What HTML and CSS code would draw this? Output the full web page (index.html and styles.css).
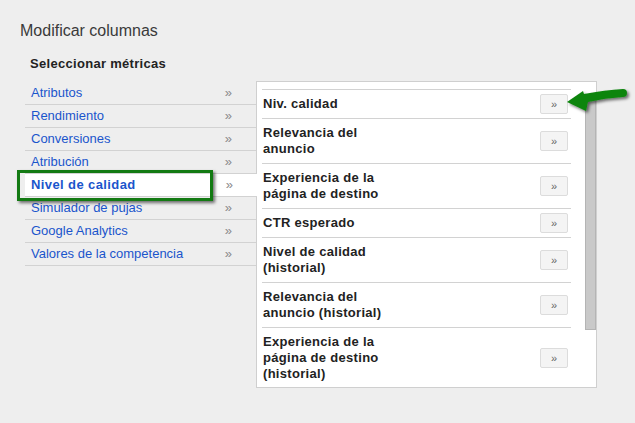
FILE: index.html
```html
<!DOCTYPE html>
<html lang="es">
<head>
<meta charset="utf-8">
<link rel="stylesheet" href="styles.css">
</head>
<body>
<div class="page">
  <h1 class="title">Modificar columnas</h1>
  <h2 class="subtitle">Seleccionar métricas</h2>
  <div class="main">
    <ul class="cats">
      <li class="cat"><span>Atributos</span><span class="chev">»</span></li>
      <li class="cat"><span>Rendimiento</span><span class="chev">»</span></li>
      <li class="cat"><span>Conversiones</span><span class="chev">»</span></li>
      <li class="cat"><span>Atribución</span><span class="chev">»</span></li>
      <li class="cat selected"><span>Nivel de calidad</span><span class="chev">»</span></li>
      <li class="cat"><span>Simulador de pujas</span><span class="chev">»</span></li>
      <li class="cat"><span>Google Analytics</span><span class="chev">»</span></li>
      <li class="cat"><span>Valores de la competencia</span><span class="chev">»</span></li>
    </ul>
    <div class="panel">
      <div class="scroll">
        <div class="inner">
          <div class="addall"><a>Añadir todas las columnas</a></div>
          <div class="row"><div class="label">Niv. calidad</div><button class="add">»</button></div>
          <div class="row"><div class="label">Relevancia del anuncio</div><button class="add">»</button></div>
          <div class="row"><div class="label">Experiencia de la página de destino</div><button class="add">»</button></div>
          <div class="row"><div class="label">CTR esperado</div><button class="add">»</button></div>
          <div class="row"><div class="label">Nivel de calidad (historial)</div><button class="add">»</button></div>
          <div class="row"><div class="label">Relevancia del anuncio (historial)</div><button class="add">»</button></div>
          <div class="row"><div class="label">Experiencia de la página de destino (historial)</div><button class="add">»</button></div>
        </div>
      </div>
      <div class="track"><div class="thumb"></div></div>
    </div>
  </div>
</div>
<div class="highlight"></div>
<svg class="arrow" width="75" height="45" viewBox="0 0 75 45">
  <defs>
    <filter id="sh" x="-20%" y="-30%" width="150%" height="170%">
      <feDropShadow dx="2" dy="2" stdDeviation="1.5" flood-color="#000" flood-opacity="0.55"/>
    </filter>
  </defs>
  <path d="M7 22 L23 11 L24 14 Q45 10 63 9 Q67 9 67 13 Q67 17 63 17 Q45 18 28 22 L26 31 Z" fill="#108510" filter="url(#sh)"/>
</svg>
</body>
</html>
```

FILE: styles.css
```css
* { box-sizing: border-box; }
html, body { margin: 0; padding: 0; }
body {
  background: #eeeeee;
  font-family: "Liberation Sans", Arial, sans-serif;
  width: 635px;
  height: 423px;
  overflow: hidden;
  position: relative;
}
.page { padding: 21px 0 0 20px; }
.title {
  margin: 0;
  font-size: 16px;
  font-weight: normal;
  line-height: 19px;
  color: #3a3a3a;
}
.subtitle {
  margin: 16px 0 0 10px;
  font-size: 13px;
  font-weight: bold;
  line-height: 15px;
  color: #222;
  letter-spacing: 0.3px;
}
.main {
  display: flex;
  align-items: flex-start;
  margin: 11px 0 0 5px;
}
.cats {
  list-style: none;
  margin: 0;
  padding: 0;
  width: 231px;
  position: relative;
  z-index: 2;
}
.cat {
  display: flex;
  justify-content: space-between;
  align-items: center;
  height: 23px;
  padding: 0 24px 1px 6px;
  border-bottom: 1px solid #d2d2d2;
  font-size: 13px;
  color: #1a55cc;
}
.cat .chev { color: #8a8a8a; font-size: 13px; }
.cat.selected {
  background: #fff;
  font-weight: bold;
  margin-right: -1px;
  letter-spacing: 0.4px;
}
.cat.selected .chev { font-weight: normal; letter-spacing: 0; }
.panel {
  width: 341px;
  height: 307px;
  margin-top: -1px;
  background: #fff;
  border: 1px solid #cfcfcf;
  display: flex;
  position: relative;
  z-index: 1;
}
.scroll {
  width: 328px;
  height: 100%;
  overflow: hidden;
  padding: 0 14px 0 5px;
}
.inner { margin-top: -12px; }
.addall {
  height: 19px;
  line-height: 15px;
  font-size: 13px;
  text-align: right;
  padding-right: 2px;
}
.addall a { color: #1a55cc; }
.row {
  display: flex;
  align-items: center;
  justify-content: space-between;
  border-top: 1px solid #d2d2d2;
  padding: 0 3px 0 1px;
}
.label {
  width: 125px;
  padding: 6px 0;
  font-size: 13px;
  font-weight: bold;
  line-height: 16px;
  color: #222;
  letter-spacing: 0.3px;
}
.add {
  width: 28px;
  height: 20px;
  padding: 0;
  background: #f4f4f4;
  border: 1px solid #dcdcdc;
  border-radius: 2px;
  font-family: "Liberation Sans", Arial, sans-serif;
  font-size: 11px;
  color: #666;
  line-height: 17px;
}
.track {
  width: 11px;
  height: 100%;
  padding-top: 18px;
}
.thumb {
  width: 11px;
  height: 230px;
  background: #c9c9c9;
  border: 1px solid #b4b4b4;
}
.highlight {
  position: absolute;
  left: 17px;
  top: 170px;
  width: 196px;
  height: 31px;
  border: 3px solid #137a13;
  box-shadow: 2px 2px 3px rgba(0,0,0,0.55);
  z-index: 5;
}
.arrow {
  position: absolute;
  left: 560px;
  top: 80px;
  z-index: 6;
}
```
